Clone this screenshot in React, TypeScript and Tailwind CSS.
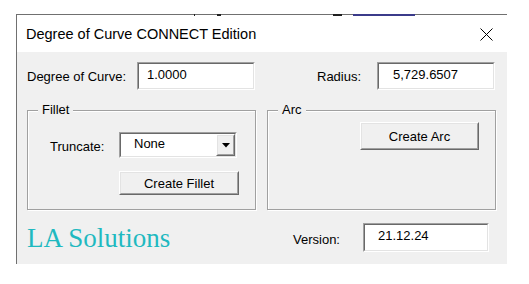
import React from 'react';

const ui = { fontFamily: '"Liberation Sans", Arial, sans-serif' };

function Sunken({ className = '', children }: { className?: string; children?: React.ReactNode }) {
  return (
    <div className={`border border-t-[#a0a0a0] border-l-[#a0a0a0] border-b-white border-r-white ${className}`}>
      <div className="h-full w-full border border-t-[#696969] border-l-[#696969] border-b-[#e3e3e3] border-r-[#e3e3e3] bg-white flex">
        {children}
      </div>
    </div>
  );
}

function Raised({ className = '', children }: { className?: string; children?: React.ReactNode }) {
  return (
    <div className={`border border-t-white border-l-white border-b-[#696969] border-r-[#696969] ${className}`}>
      <div className="h-full w-full border border-t-[#e3e3e3] border-l-[#e3e3e3] border-b-[#a0a0a0] border-r-[#a0a0a0] bg-[#f0f0f0] flex items-center justify-center">
        {children}
      </div>
    </div>
  );
}

function Group({ label, className = '', children }: { label: string; className?: string; children?: React.ReactNode }) {
  return (
    <div className={`relative border border-[#a0a0a0] shadow-[1px_1px_0_#ffffff,inset_1px_1px_0_#ffffff] ${className}`}>
      <span className="absolute left-[10px] top-[-9px] bg-[#f0f0f0] px-[4px] leading-[16px] text-[13px] text-black">{label}</span>
      {children}
    </div>
  );
}

export default function App() {
  return (
    <div className="relative w-[529px] h-[284px] bg-white pt-[14px] pl-[16px] overflow-hidden text-black" style={ui}>
      {/* bits of the window behind */}
      <div className="absolute top-[14px] left-[194px] w-[1px] h-[2px] bg-[#202020]" />
      <div className="absolute top-[14px] left-[217px] w-[4px] h-[2px] bg-[#202020]" />
      <div className="absolute top-[14px] left-[333px] w-[9px] h-[2px] bg-[#202020]" />
      <div className="absolute top-[14px] left-[353px] w-[62px] h-[2px] bg-[#3b3b8a]" />

      <div className="w-[491px] h-[250px] border-t border-l border-[#707070] flex flex-col">
        <div className="h-[37px] bg-white flex items-center justify-between pl-[9px] pr-[14px]">
          <span className="text-[14.5px] leading-[18px]">Degree of Curve CONNECT Edition</span>
          <svg width="13" height="13" viewBox="0 0 13 13" className="mt-[1px]">
            <path d="M0.5 0.5 L12.5 12.5 M12.5 0.5 L0.5 12.5" stroke="#000" strokeWidth="1" fill="none" />
          </svg>
        </div>

        <div className="flex-1 bg-[#f0f0f0] text-[13px] leading-[15px]">
          <div className="flex items-center h-[28px] mt-[10px] pl-[10px]">
            <span className="w-[110px]">Degree of Curve:</span>
            <Sunken className="w-[118px] h-[28px]">
              <span className="pl-[8px] pt-[3px]">1.0000</span>
            </Sunken>
            <span className="w-[62px]" />
            <span className="w-[60px]">Radius:</span>
            <Sunken className="w-[118px] h-[28px]">
              <span className="pl-[14px] pt-[3px]">5,729.6507</span>
            </Sunken>
          </div>

          <div className="flex mt-[20px] pl-[10px] gap-[11px]">
            <Group label="Fillet" className="w-[229px] h-[100px] pt-[21px]">
              <div className="flex items-center">
                <span className="w-[91px] pl-[22px] pt-[3px]">Truncate:</span>
                <Sunken className="w-[118px] h-[26px]">
                  <span className="flex-1 pl-[13px] pt-[2px]">None</span>
                  <Raised className="w-[19px] h-full">
                    <svg width="8" height="5" viewBox="0 0 8 5">
                      <path d="M0 0 H8 L4 4.5 Z" fill="#000" />
                    </svg>
                  </Raised>
                </Sunken>
              </div>
              <Raised className="w-[120px] h-[24px] ml-[91px] mt-[13px]">
                <span>Create Fillet</span>
              </Raised>
            </Group>
            <Group label="Arc" className="w-[229px] h-[100px] pt-[11px]">
              <Raised className="w-[119px] h-[28px] ml-[92px]">
                <span>Create Arc</span>
              </Raised>
            </Group>
          </div>

          <div className="flex items-center h-[29px] mt-[13px] pl-[10px]">
            <span
              className="w-[266px] text-[27px] leading-[30px] text-[#1fb9c0]"
              style={{ fontFamily: '"Liberation Serif", "Times New Roman", serif' }}
            >
              LA Solutions
            </span>
            <span className="w-[70px] pt-[3px]">Version:</span>
            <Sunken className="w-[126px] h-[29px]">
              <span className="pl-[13px] pt-[3px]">21.12.24</span>
            </Sunken>
          </div>
        </div>
      </div>
    </div>
  );
}
